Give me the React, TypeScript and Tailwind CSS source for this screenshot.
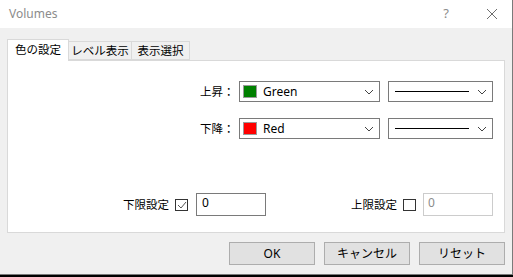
import { FC } from 'react';

const font = { fontFamily: '"Noto Sans", "Noto Sans CJK JP", sans-serif' };

const Chevron: FC = () => (
	<svg width="10" height="6" viewBox="0 0 10 6" className="shrink-0">
		<path d="M1 1 L5 5 L9 1" fill="none" stroke="#444" strokeWidth="1" />
	</svg>
);

const ColorSelect: FC<{ color: string; name: string }> = ({ color, name }) => (
	<div className="flex items-center w-[141px] h-[21px] border border-[#7a7a7a] bg-white pl-[3px] pr-[5px]">
		<span className="w-[14px] h-[13px] border border-[#9a9a9a]" style={{ backgroundColor: color }} />
		<span className="ml-[6px] flex-1 text-[12px] text-black">{name}</span>
		<Chevron />
	</div>
);

const LineSelect: FC = () => (
	<div className="flex items-center w-[105px] h-[21px] border border-[#7a7a7a] bg-white pl-[6px] pr-[5px]">
		<span className="w-[74px] h-px bg-black" />
		<span className="flex-1" />
		<Chevron />
	</div>
);

const Button: FC<{ label: string }> = ({ label }) => (
	<button className="w-[86px] h-[23px] bg-[#e1e1e1] border border-[#adadad] text-[12px] text-black">{label}</button>
);

export default function App() {
	return (
		<div className="w-[513px] h-[277px] bg-black" style={font}>
			<div className="w-[513px] h-[275px] bg-[#f0f0f0] border-r border-b border-[#7a7a7a] flex flex-col">
				<div className="h-[28px] bg-white flex items-center pl-[9px] pr-[14px] shrink-0">
					<span className="text-[12px] text-[#8c8c8c] flex-1">Volumes</span>
					<span className="text-[13px] text-[#8c8c8c] mr-[37px]">?</span>
					<svg width="12" height="12" viewBox="0 0 12 12">
						<path d="M1 1 L11 11 M11 1 L1 11" stroke="#6e6e6e" strokeWidth="1" />
					</svg>
				</div>

				<div className="pl-[7px] pr-[7px] pt-[10px]">
					<div className="flex items-end h-[22px] text-[11.5px] text-black">
						<div className="w-[62px] h-[22px] bg-white border border-b-0 border-[#d9d9d9] flex items-center justify-center relative z-10 -mb-px pb-px">
							色の設定
						</div>
						<div className="w-[63px] h-[19px] border border-l-0 border-[#d9d9d9] flex items-center justify-center">
							レベル表示
						</div>
						<div className="w-[58px] h-[19px] border border-l-0 border-[#d9d9d9] flex items-center justify-center">
							表示選択
						</div>
					</div>

					<div className="h-[173px] bg-white border border-[#d9d9d9] text-[11.5px] text-black relative">
						<div className="flex flex-col gap-[16px] pt-[20px] pl-[192px]">
							<div className="flex items-center">
								<span className="w-[39px]">上昇：</span>
								<ColorSelect color="#008000" name="Green" />
								<span className="w-[8px]" />
								<LineSelect />
							</div>
							<div className="flex items-center">
								<span className="w-[39px]">下降：</span>
								<ColorSelect color="#ff0000" name="Red" />
								<span className="w-[8px]" />
								<LineSelect />
							</div>
						</div>

						<div className="flex items-center mt-[54px] pl-[115px]">
							<span>下限設定</span>
							<span className="ml-[6px] w-[13px] h-[12px] border border-[#333] flex items-center justify-center">
								<svg width="10" height="8" viewBox="0 0 10 8">
									<path d="M1 4 L4 7 L9 1" fill="none" stroke="#555" strokeWidth="1" />
								</svg>
							</span>
							<div className="ml-[8px] w-[70px] h-[23px] border border-[#7a7a7a] bg-white pl-[5px] pt-[1px] leading-[16px] text-[12px]">0</div>
							<span className="ml-[85px]">上限設定</span>
							<span className="ml-[6px] w-[13px] h-[12px] border border-[#333]" />
							<div className="ml-[7px] w-[70px] h-[23px] border border-[#cccccc] bg-white pl-[4px] pt-[1px] leading-[16px] text-[12px] text-[#8c8c8c]">0</div>
						</div>
					</div>
				</div>

				<div className="flex justify-end gap-[9px] pr-[7px] mt-[9px]">
					<Button label="OK" />
					<Button label="キャンセル" />
					<Button label="リセット" />
				</div>
			</div>
		</div>
	);
}
